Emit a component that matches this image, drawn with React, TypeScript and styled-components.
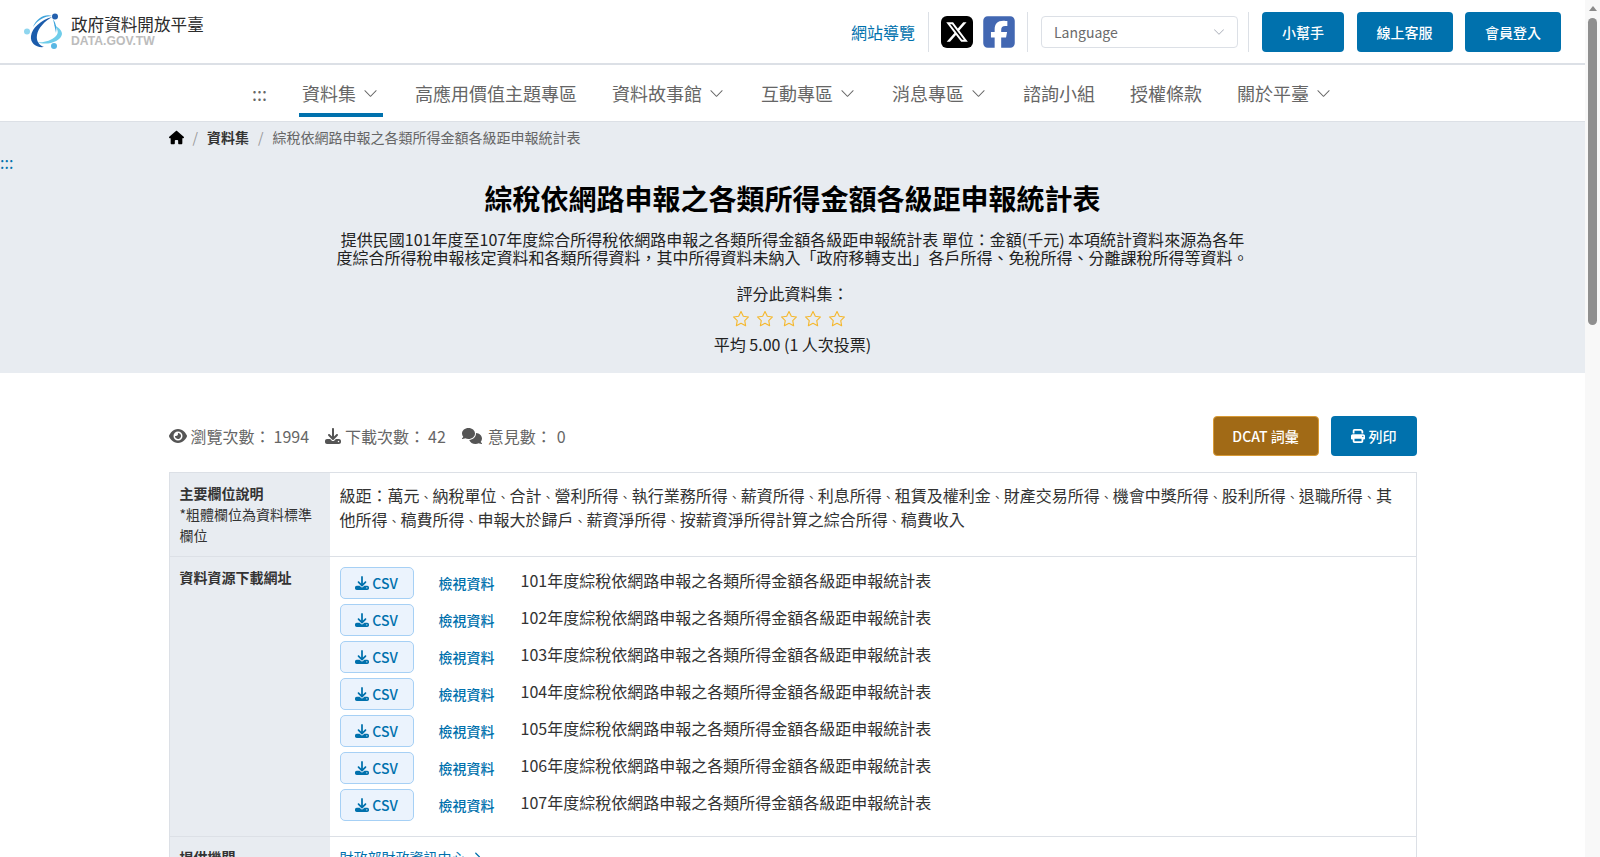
import { Fragment } from 'react';
import styled, { createGlobalStyle } from 'styled-components';
import { FaHouse, FaEye, FaDownload, FaComments, FaPrint, FaSquareFacebook, FaXTwitter, FaChevronRight } from 'react-icons/fa6';
import { BsChevronDown } from 'react-icons/bs';
import { FiStar } from 'react-icons/fi';

const BLUE = '#0071ad';
const LINE = '#dce0e6';
const PANEL = '#e8ecf1';

const GlobalStyle = createGlobalStyle`
	body {
		margin: 0;
		padding-right: 15px;
		min-height: 2308px;
		background: #fff;
		color: #333;
		font-family: 'Noto Sans CJK TC', 'Noto Sans', sans-serif;
		font-size: 16px;
	}
	* {
		box-sizing: border-box;
	}
`;

const ScrollRail = styled.div`
	position: fixed;
	top: 0;
	right: 0;
	width: 15px;
	height: 100vh;
	padding: 6px 3px 0;
	background: #f8f8f8;
`;

const ScrollArrow = styled.div`
	width: 0;
	height: 0;
	margin: 0 auto 7px;
	border-left: 4.5px solid transparent;
	border-right: 4.5px solid transparent;
	border-bottom: 5px solid #8a8a8a;
`;

const ScrollThumb = styled.div`
	height: 307px;
	border-radius: 5px;
	background: #8f8f8f;
`;

const Header = styled.header`
	display: flex;
	align-items: center;
	justify-content: space-between;
	height: 65px;
	padding: 0 24px;
	border-bottom: 2px solid ${LINE};
`;

const Logo = styled.a`
	display: flex;
	align-items: center;
	gap: 7px;
`;

const LogoText = styled.div`
	display: flex;
	flex-direction: column;
`;

const LogoTitle = styled.span`
	font-size: 16.6px;
	line-height: 19px;
	color: #2b2b2b;
`;

const LogoSub = styled.span`
	font-family: 'Liberation Sans', sans-serif;
	font-size: 12.2px;
	font-weight: 700;
	line-height: 15px;
	color: #bcbcbc;
`;

const HeaderTools = styled.div`
	display: flex;
	align-items: center;
	height: 40px;
`;

const SiteMap = styled.a`
	color: ${BLUE};
	font-size: 16px;
	padding-right: 13px;
`;

const Social = styled.div`
	display: flex;
	align-items: center;
	gap: 10px;
	height: 40px;
	padding: 0 12px;
	border-left: 1px solid ${LINE};
	border-right: 1px solid ${LINE};
`;

const XBadge = styled.span`
	display: flex;
	align-items: center;
	justify-content: center;
	width: 32px;
	height: 32px;
	border-radius: 6px;
	background: #000;
	color: #fff;
	font-size: 24px;
`;

const FacebookBadge = styled.span`
	display: flex;
	color: #4267b2;
	font-size: 36px;
	margin: 0 -2px;
`;

const LanguageSelect = styled.div`
	display: flex;
	align-items: center;
	justify-content: space-between;
	width: 197px;
	height: 32px;
	margin: 0 10px 0 13px;
	padding: 0 12px;
	border: 1px solid ${LINE};
	border-radius: 4px;
	color: #6b6b6b;
	font-size: 14px;
	svg {
		color: #a9adb8;
	}
`;

const ButtonGroup = styled.div`
	display: flex;
	gap: 12.5px;
	height: 40px;
	padding-left: 13px;
	border-left: 1px solid ${LINE};
`;

const HeaderButton = styled.button<{ $width: number }>`
	width: ${(p) => p.$width}px;
	height: 40px;
	border: none;
	border-radius: 4px;
	background: ${BLUE};
	color: #fff;
	font-family: inherit;
	font-size: 14px;
	font-weight: 500;
`;

const Nav = styled.nav`
	display: flex;
	justify-content: center;
	align-items: stretch;
	gap: 29px;
	height: 57px;
	border-bottom: 1px solid ${LINE};
	padding-bottom: 4px;
`;

const NavItem = styled.a<{ $active?: boolean }>`
	display: flex;
	align-items: center;
	gap: 7px;
	padding: 8px 3px 0;
	color: #666;
	font-size: 18px;
	border-bottom: 4px solid ${(p) => (p.$active ? BLUE : 'transparent')};
	svg {
		margin-right: 2px;
	}
`;

const Banner = styled.section`
	display: flex;
	flex-direction: column;
	align-items: center;
	height: 251px;
	background: ${PANEL};
`;

const Breadcrumb = styled.ol`
	display: flex;
	align-items: center;
	gap: 9px;
	width: 1248px;
	height: 30px;
	margin: 0 0 2px;
	padding: 0;
	list-style: none;
	font-size: 14px;
	color: #666;
`;

const Crumb = styled.li<{ $strong?: boolean }>`
	display: flex;
	color: ${(p) => (p.$strong ? '#333' : 'inherit')};
	font-weight: ${(p) => (p.$strong ? 700 : 400)};
`;

const HomeCrumb = styled(Crumb)`
	color: #000;
	font-size: 15px;
`;

const CrumbSep = styled.li`
	color: #999;
`;

const SkipMark = styled.a`
	align-self: flex-start;
	color: ${BLUE};
	font-size: 16px;
	line-height: 16px;
	height: 16px;
`;

const Title = styled.h1`
	margin: 8px 0 13px;
	color: #000;
	font-size: 28px;
	line-height: 40px;
	font-weight: 700;
`;

const Description = styled.p`
	width: 915px;
	margin: 0 0 15px;
	color: #222;
	font-size: 16px;
	line-height: 17.6px;
	text-align: center;
`;

const RateLabel = styled.div`
	color: #222;
	line-height: 24px;
`;

const Stars = styled.div`
	display: flex;
	gap: 6px;
	height: 27px;
	padding-right: 8px;
	align-items: center;
	color: #f5b82e;
	font-size: 18px;
`;

const RateAverage = styled.div`
	color: #222;
	line-height: 25px;
`;

const Main = styled.main`
	width: 1248px;
	margin: 0 auto;
	padding-top: 42px;
`;

const StatsRow = styled.div`
	display: flex;
	align-items: center;
	justify-content: space-between;
	height: 41px;
	margin-bottom: 16px;
`;

const Stats = styled.div`
	display: flex;
	align-items: center;
	gap: 16px;
	color: #666;
`;

const Stat = styled.span`
	display: flex;
	align-items: center;
	gap: 4px;
	svg {
		color: #555;
		font-size: 16px;
	}
`;

const StatValue = styled.span`
	margin-left: -1px;
`;

const CommentStat = styled(Stat)`
	gap: 6px;
`;

const Actions = styled.div`
	display: flex;
	gap: 12px;
`;

const DcatButton = styled.button`
	width: 106px;
	height: 40px;
	border: 1px solid #d89a35;
	border-radius: 4px;
	background: #a16a16;
	color: #fff;
	font-family: inherit;
	font-size: 14px;
	font-weight: 500;
`;

const PrintButton = styled.button`
	display: flex;
	align-items: center;
	justify-content: center;
	gap: 4px;
	width: 86px;
	height: 40px;
	border: none;
	border-radius: 4px;
	background: ${BLUE};
	color: #fff;
	font-family: inherit;
	font-size: 14px;
	font-weight: 500;
`;

const InfoTable = styled.div`
	border: 1px solid ${LINE};
	border-bottom: none;
`;

const InfoRow = styled.div`
	display: grid;
	grid-template-columns: 160px 1fr;
	border-bottom: 1px solid ${LINE};
`;

const RowHead = styled.div`
	padding: 10px;
	background: ${PANEL};
	font-size: 14px;
	line-height: 20.8px;
	color: #333;
`;

const RowHeadTitle = styled.strong`
	display: block;
	font-weight: 700;
`;

const RowBody = styled.div`
	padding: 10px;
	min-height: 83px;
	line-height: 24px;
	color: #333;
`;

const ListComma = styled.span`
	display: inline-block;
	margin: 0 0.5px;
	font-size: 12px;
	line-height: 1;
`;

const ResourceBody = styled(RowBody)`
	display: flex;
	flex-direction: column;
	gap: 5px;
	padding-bottom: 15px;
`;

const Resource = styled.div`
	display: flex;
	align-items: flex-start;
	height: 32px;
`;

const CsvButton = styled.a`
	display: flex;
	align-items: center;
	justify-content: center;
	gap: 3px;
	width: 74px;
	height: 32px;
	border: 1px solid #a6d0f5;
	border-radius: 5px;
	background: #ebf3fd;
	color: ${BLUE};
	font-size: 14px;
	font-weight: 500;
`;

const ViewLink = styled.a`
	margin: 4px 26px 0 25px;
	color: ${BLUE};
	font-size: 14px;
	font-weight: 500;
`;

const ResourceName = styled.span`
	margin-top: 1px;
	color: #333;
	font-size: 16px;
`;

const AgencyLink = styled.a`
	display: flex;
	align-items: center;
	gap: 6px;
	color: ${BLUE};
	font-size: 14px;
	line-height: 20px;
	svg {
		font-size: 10px;
	}
`;

const LogoMark = () => (
	<svg width='40' height='37' viewBox='0 0 40 37'>
		<path d='M13 29C22 33 37 29 38 21C38 17 34 14 30 12C34 16 35 20 32 23C27 28 19 30 13 29z' fill='#6fcdea' />
		<path d='M28 4C17 7 8 15 7 23C6 30 12 35 20 34C15 32 12 28 13 22C14 15 21 8 28 4z' fill='#1c5cab' />
		<path d='M9 14C12 5 22 0 28 3C20 3 14 7 9 14z' fill='#3fa4dc' />
		<path d='M29 6C32 10 33 15 32 20C31 15 30 10 29 6z' fill='#3fa4dc' />
		<circle cx='31' cy='3.5' r='3' fill='#2460ae' />
		<circle cx='3' cy='18.5' r='3' fill='#8fd6ef' />
		<circle cx='30' cy='33' r='3' fill='#58b7e4' />
	</svg>
);

const navItems: { label: string; chevron?: boolean; active?: boolean }[] = [
	{ label: ':::' },
	{ label: '資料集', chevron: true, active: true },
	{ label: '高應用價值主題專區' },
	{ label: '資料故事館', chevron: true },
	{ label: '互動專區', chevron: true },
	{ label: '消息專區', chevron: true },
	{ label: '諮詢小組' },
	{ label: '授權條款' },
	{ label: '關於平臺', chevron: true },
];

const years = ['101', '102', '103', '104', '105', '106', '107'];

const fieldList =
	'級距：萬元、納稅單位、合計、營利所得、執行業務所得、薪資所得、利息所得、租賃及權利金、財產交易所得、機會中獎所得、股利所得、退職所得、其他所得、稿費所得、申報大於歸戶、薪資淨所得、按薪資淨所得計算之綜合所得、稿費收入';

export default function App() {
	const fields = fieldList.split('、');

	return (
		<>
			<GlobalStyle />
			<ScrollRail>
				<ScrollArrow />
				<ScrollThumb />
			</ScrollRail>
			<Header>
				<Logo>
					<LogoMark />
					<LogoText>
						<LogoTitle>政府資料開放平臺</LogoTitle>
						<LogoSub>DATA.GOV.TW</LogoSub>
					</LogoText>
				</Logo>
				<HeaderTools>
					<SiteMap>網站導覽</SiteMap>
					<Social>
						<XBadge>
							<FaXTwitter />
						</XBadge>
						<FacebookBadge>
							<FaSquareFacebook />
						</FacebookBadge>
					</Social>
					<LanguageSelect>
						Language
						<BsChevronDown size={12} />
					</LanguageSelect>
					<ButtonGroup>
						<HeaderButton $width={82}>小幫手</HeaderButton>
						<HeaderButton $width={96}>線上客服</HeaderButton>
						<HeaderButton $width={96}>會員登入</HeaderButton>
					</ButtonGroup>
				</HeaderTools>
			</Header>
			<Nav>
				{navItems.map((item) => (
					<NavItem key={item.label} $active={item.active}>
						{item.label}
						{item.chevron && <BsChevronDown size={15} />}
					</NavItem>
				))}
			</Nav>
			<Banner>
				<Breadcrumb>
					<HomeCrumb>
						<FaHouse />
					</HomeCrumb>
					<CrumbSep>/</CrumbSep>
					<Crumb $strong>資料集</Crumb>
					<CrumbSep>/</CrumbSep>
					<Crumb>綜稅依網路申報之各類所得金額各級距申報統計表</Crumb>
				</Breadcrumb>
				<SkipMark>:::</SkipMark>
				<Title>綜稅依網路申報之各類所得金額各級距申報統計表</Title>
				<Description>
					提供民國101年度至107年度綜合所得稅依網路申報之各類所得金額各級距申報統計表 單位：金額(千元) 本項統計資料來源為各年度綜合所得稅申報核定資料和各類所得資料，其中所得資料未納入「政府移轉支出」各戶所得、免稅所得、分離課稅所得等資料。
				</Description>
				<RateLabel>評分此資料集：</RateLabel>
				<Stars>
					{[1, 2, 3, 4, 5].map((n) => (
						<FiStar key={n} strokeWidth={1.5} />
					))}
				</Stars>
				<RateAverage>平均 5.00 (1 人次投票)</RateAverage>
			</Banner>
			<Main>
				<StatsRow>
					<Stats>
						<Stat>
							<FaEye size={18} />
							瀏覽次數：<StatValue>1994</StatValue>
						</Stat>
						<Stat>
							<FaDownload />
							下載次數：<StatValue>42</StatValue>
						</Stat>
						<CommentStat>
							<FaComments size={20} />
							意見數：<StatValue>0</StatValue>
						</CommentStat>
					</Stats>
					<Actions>
						<DcatButton>DCAT 詞彙</DcatButton>
						<PrintButton>
							<FaPrint />
							列印
						</PrintButton>
					</Actions>
				</StatsRow>
				<InfoTable>
					<InfoRow>
						<RowHead>
							<RowHeadTitle>主要欄位說明</RowHeadTitle>
							*粗體欄位為資料標準欄位
						</RowHead>
						<RowBody>
							{fields.map((field, i) => (
								<Fragment key={field}>
									{field === '其他所得' ? (
										<>
											其
											<wbr />
											他所得
										</>
									) : (
										field
									)}
									{i < fields.length - 1 && <ListComma>、</ListComma>}
								</Fragment>
							))}
						</RowBody>
					</InfoRow>
					<InfoRow>
						<RowHead>
							<RowHeadTitle>資料資源下載網址</RowHeadTitle>
						</RowHead>
						<ResourceBody>
							{years.map((year) => (
								<Resource key={year}>
									<CsvButton>
										<FaDownload />
										CSV
									</CsvButton>
									<ViewLink>檢視資料</ViewLink>
									<ResourceName>{year}年度綜稅依網路申報之各類所得金額各級距申報統計表</ResourceName>
								</Resource>
							))}
						</ResourceBody>
					</InfoRow>
					<InfoRow>
						<RowHead>
							<RowHeadTitle>提供機關</RowHeadTitle>
						</RowHead>
						<RowBody>
							<AgencyLink>
								財政部財政資訊中心
								<FaChevronRight />
							</AgencyLink>
						</RowBody>
					</InfoRow>
				</InfoTable>
			</Main>
		</>
	);
}
